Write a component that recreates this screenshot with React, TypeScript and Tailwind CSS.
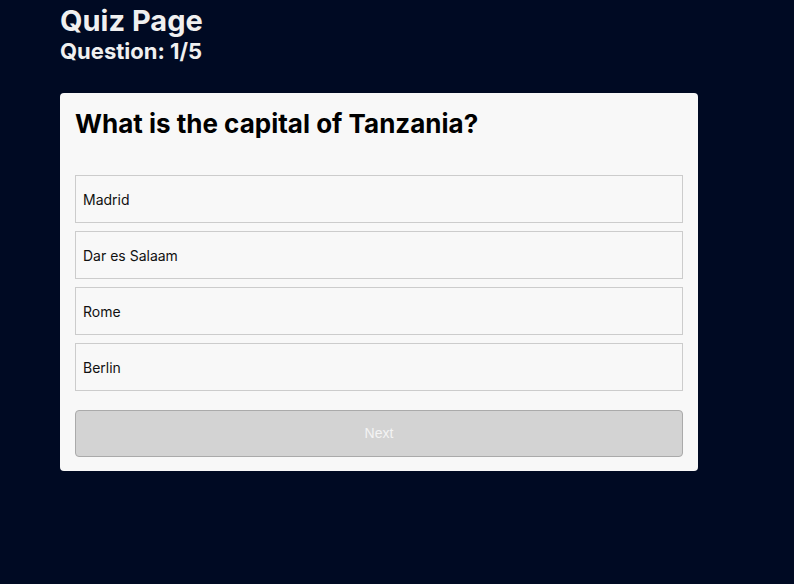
import React from "react";

export default function App() {
  const options = ["Madrid", "Dar es Salaam", "Rome", "Berlin"];
  return (
    <div className="min-h-[584px] w-full bg-[#000a23] font-['Inter',sans-serif]">
      <div className="pl-[60px] pt-[3px]">
        <h1 className="text-[29px] font-bold leading-[36px] text-[#f0f0f0]">Quiz Page</h1>
        <h2 className="text-[22px] font-bold leading-[25px] text-[#f0f0f0]">Question: 1/5</h2>
        <div className="mt-[29px] w-[638px] rounded-[4px] bg-[#f8f8f8] px-[15px] pt-[14px] pb-[14px]">
          <h3 className="text-[26px] font-bold leading-[34px] text-black">What is the capital of Tanzania?</h3>
          <div className="mt-[34px] flex flex-col gap-[8px]">
            {options.map((o) => (
              <div
                key={o}
                className="flex h-[48px] items-center border border-[#cccccc] bg-[#f8f8f8] px-[7px] pt-[1px] text-[14px] text-[#111111]"
              >
                {o}
              </div>
            ))}
          </div>
          <button className="mt-[19px] flex h-[47px] w-full items-center justify-center rounded-[4px] border border-[#aaaaaa] bg-[#d3d3d3] font-['Liberation_Sans',Arial,sans-serif] text-[14px] text-[#f4f4f4]">
            Next
          </button>
        </div>
      </div>
    </div>
  );
}
